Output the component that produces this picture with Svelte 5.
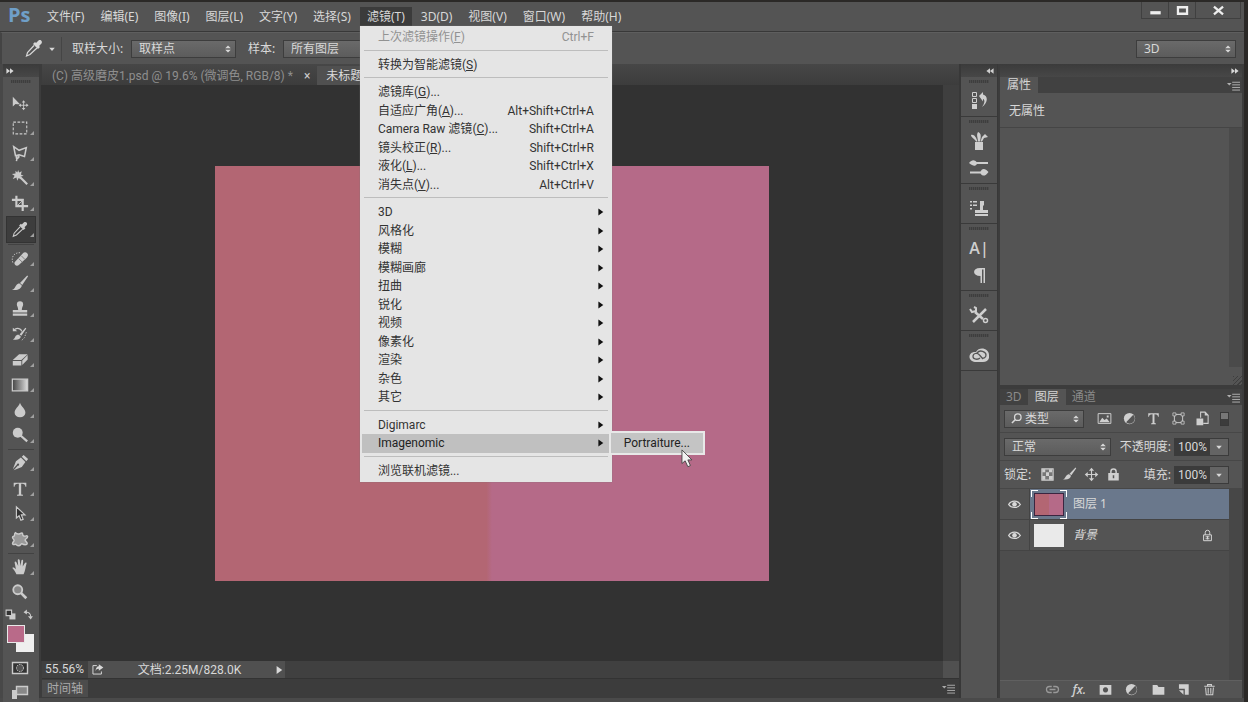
<!--
@component
Photo editor workspace: menu bar with the filter menu open, tool options,
toolbox, document area, icon dock, properties and layers panels.
-->
<script>
  // All icons share a 20x20 box and draw in currentColor.
  const icons = {
    move: '<path fill="currentColor" d="M2 3v11l3-3 2 .5h3z"/><path stroke="currentColor" fill="none" d="M10 12.500h8M14 8.500v8"/><path fill="currentColor" d="M14 7l2 2.500h-4zM14 18l2-2.500h-4zM8.500 12.500l2.500-2v4zM19.500 12.500l-2.500-2v4z"/>',
    marquee: '<path fill="none" stroke="currentColor" stroke-width="1.200" stroke-dasharray="3 1.700" d="M2.500 3.500h15v13h-15z"/>',
    lasso: '<path fill="none" stroke="currentColor" stroke-width="1.700" d="M3 3l6 4 8-3-2 10-6-2-4 1zM5 13c3-1 5 1 3 2.500-2 1.500-3-.500-1-1.500M7 15l-1 4"/>',
    wand: '<path fill="currentColor" d="M8 1l1 3 3-1.500L11 6l3 1.500-3.500 1L12 12l-3.500-2L7 13l-1-3.500L2 11l2-3.500-3-2 4-.500L5 2l2 2z"/><path stroke="currentColor" stroke-width="2.400" d="M10 9l8 8"/>',
    crop: '<path fill="none" stroke="currentColor" stroke-width="2.400" d="M6 2v11.500h13M1 6.500h12V19"/><path stroke="currentColor" d="M7 13l7-7"/>',
    eyedropper: '<path fill="currentColor" d="M12 4l2.500-2.500c2-1.500 4.500 1 3 3L15 7l1 1-2 2-5-5 2-2z"/><path fill="none" stroke="currentColor" stroke-width="1.200" d="M10 6.500l-6.500 7L2.500 17l3.500-1.500 7-6.500"/>',
    heal: '<path fill="currentColor" d="M5 12.500L13 4c1.500-2 3.500-2 5-.500s1 3.500-.500 5L9 16.500c-1.500 1.500-3.500 1.300-4.500 0s-1-2.500.500-4z"/><path stroke="#777" fill="none" d="M8.500 9.500l4 4M11.500 6.500l4 4"/><path fill="none" stroke="currentColor" stroke-dasharray="1.500 1.500" d="M2 14C0 8 3 3 10 3"/>',
    brush: '<path fill="currentColor" d="M19 1.500L12.500 11l-2.500-2 8-8.500zM9.500 9.500l2.500 2.300c-.500 3.700-4.500 5.700-11 4.700 3-.500 3-2.500 4.500-4.500 1-2 2.500-2.500 4-2.500z"/>',
    stamp: '<path fill="currentColor" d="M6.500 5a3.500 3.500 0 0 1 7 0c0 2-1.500 3-1.500 6h6v3H2v-3h6C8 8 6.500 7 6.500 5zM2 15h16v2.500H2z"/>',
    history: '<path fill="currentColor" d="M16 3l1 1-5.500 8-2-1.500zM9 11l2 2c-1 3-4 4-9 3 2.500-1 2-2 3-3.500C6 11 7.500 10.500 9 11z"/><path fill="none" stroke="currentColor" stroke-width="1.400" d="M4 5c3-2 7-1.500 8 2"/><path fill="currentColor" d="M2 3l5 4H2z"/><path fill="none" stroke="currentColor" stroke-dasharray="1.500 1.500" d="M17 8l-2 6-4 4"/>',
    eraser: '<path fill="currentColor" d="M9 3.500h9.500l-7 6.500H2zM2 11h9.500v5H2zM12.500 10.500l6-6v5l-6 6z"/>',
    gradient: '<defs><linearGradient id="ramp"><stop stop-color="#444"/><stop offset="1" stop-color="#ddd"/></linearGradient></defs><path fill="url(#ramp)" stroke="currentColor" stroke-width="1.400" d="M1.500 3.500h17v13h-17z"/>',
    drop: '<path fill="currentColor" d="M10 2c1 4 6 6.500 6 11a6 5 0 0 1-12 0c0-4.500 5-7 6-11z"/>',
    dodge: '<circle cx="7.500" cy="7.500" r="5.500" fill="currentColor"/><path stroke="currentColor" stroke-width="2.500" d="M10 10l8 7"/>',
    pen: '<path fill="currentColor" d="M2 17L5.500 8 11 4l5 5-4 5.500-9 3.500 4.500-5a1.300 1.300 0 1 0-1-1zM12 3l2-2 5 4.500-2 2.500z"/>',
    type: '<path fill="currentColor" d="M3 3h14v4.500h-1c-.300-2-.800-3.200-4.700-3.200v11.700l2 .500v1h-6.600v-1l2-.500V4.300C4.800 4.300 4.300 5.500 4 7.500H3z"/>',
    arrow: '<path fill="#333" stroke="currentColor" stroke-width="1.300" d="M6 2v12.500l3-2.500 2 5 2.500-1-2-5h4z"/>',
    shape: '<path fill="#999" stroke="currentColor" stroke-width="1.600" d="M5 3c2 2 3 2 5 1s3-1 3 1 2 2 4 1.500 2 2-.500 3.500 1.500 3 1.500 5-4 1.500-5.500.500-1.500 2-4 2-2-2-4-1.500S1 16 2 14s2.500-2 1-3.500-2-3 0-3.500S3 4 5 3z"/>',
    hand: '<path fill="currentColor" d="M6 18c-1-3-3-5-4.500-7 1-1 2.300-.500 4 1.500L4 5c0-1.300 1.500-1.500 2-.300L8 9 7.500 2.500c0-1.500 2-1.500 2.200 0L10.500 9l1-6c.300-1.500 2-1.200 2 .200L13 9.500l2.500-4c.800-1.200 2.200-.500 1.700.800C16 10 16 14 14 18z"/>',
    zoom: '<circle cx="7.500" cy="7.500" r="5" fill="#888" stroke="currentColor" stroke-width="2"/><path stroke="currentColor" stroke-width="3" d="M11 11l6 6"/>',
    mask: '<path fill="#333" stroke="currentColor" stroke-width="1.400" d="M2.500 4.500h15v11h-15z"/><circle cx="10" cy="10" r="3.500" fill="#555" stroke="currentColor" stroke-dasharray="1.500 1"/>',
    screen: '<path fill="currentColor" d="M2 8h5v9H2z"/><path fill="#888" stroke="currentColor" stroke-width="1.400" d="M6.500 4.500h11v8h-11z"/>',
    historyPanel: '<path fill="none" stroke="currentColor" d="M3.500 1.500h4v4h-4zM3.500 7.500h4v4h-4z"/><path fill="currentColor" d="M3 13h5v5H3zM10 5l4-4v2.500c5 1 5.500 8-1 12.500 3-4 3-7.500 1-8v2.500z"/>',
    brushPots: '<path fill="currentColor" d="M6 11h8v8H6zM2 4c3-1 5 2 6.500 6.500H7C6 7.500 2 7 2 4zM9 1c3 1 3.500 4 2 9.500H9C9 7 7 4 9 1zM13 6l3-3 3 3-4 1-2 3.500h-1.500z"/>',
    brushes: '<path fill="currentColor" d="M0 5c3-4 6-3 7.500-1H19v2H8C6 9 4 8 0 5zM19.500 14c-3 4.500-6 4.500-8 1.500H1v-2h10.500c2-4 5-3 8 .500z"/>',
    clone: '<path fill="currentColor" d="M1 3h2v1.500H1zM4 3h4v1.500H4zM1 6.500h2V8H1zM4 6.500h4V8H4zM1 10h2v1.500H1zM11 3h4v4l-1 1v4h5v3H6v-3h5V8zM6 16h13v2H6z"/>',
    paragraph: '<path fill="currentColor" d="M16 3v15h-1.500V4.500H13V18h-1.500v-7C3 11 3 3 11 3z"/>',
    presets: '<path stroke="currentColor" stroke-width="2.500" d="M4 17L17 4M6 7l8 7"/><path fill="none" stroke="currentColor" stroke-width="2" d="M1 4l2 3 4-1V3L5 2"/><circle cx="16.500" cy="15.500" r="2" fill="none" stroke="currentColor" stroke-width="1.500"/>',
    cloud: '<path fill="currentColor" d="M6 17c-8-1-7-11 1-10 3-6 13-4 13 3 1 4-2 7-6 7z"/><path fill="none" stroke="#555" stroke-width="1.300" d="M11 13c-2 2-7 1.500-7-1.500s4-4.500 6.500-1.500l3.500 4M8 8c3-4 9-1 9 2s-3 4-5 2"/>',
    picture: '<path fill="none" stroke="currentColor" stroke-width="1.300" d="M1.500 3.500h17v13h-17z"/><path fill="currentColor" d="M3 15l4-6 3 3 3-2 4 5zM13 6h2.500v2.500H13z"/>',
    adjust: '<circle cx="10" cy="10" r="7.500" fill="currentColor"/><path fill="#555" d="M15 5a6.500 6.500 0 0 1-9.500 10z"/>',
    vector: '<path fill="none" stroke="currentColor" stroke-width="1.300" d="M4.500 5v10M15.500 5v10M5 4.500h10M5 15.500h10"/><path fill="#555" stroke="currentColor" d="M2.500 2.500h4v4h-4zM13.500 2.500h4v4h-4zM2.500 13.500h4v4h-4zM13.500 13.500h4v4h-4z"/>',
    smart: '<path fill="none" stroke="currentColor" stroke-width="1.400" d="M7.500 9V1.500h6l4 4v11H11"/><path fill="currentColor" d="M2 10h9v9H2zM13 1v5h5z"/>',
    pixels: '<path fill="#777" stroke="currentColor" stroke-width="1.500" d="M2.500 2.500h15v15h-15z"/><path fill="currentColor" d="M3 3h4v4H3zM12 3h4v4h-4zM8 7h4v5H8zM3 12h4v5H3zM12 12h5v5h-5z"/>',
    cross: '<path fill="none" stroke="currentColor" stroke-width="1.500" d="M3 10h14M10 3v14"/><path fill="currentColor" d="M10 1l3.500 4h-7zM10 19l3.500-4h-7zM1 10l4-3.500v7zM19 10l-4-3.500v7z"/>',
    lock: '<path fill="none" stroke="currentColor" stroke-width="2" d="M6.500 9V6a3.500 3.500 0 0 1 7 0v3"/><path fill="currentColor" fill-rule="evenodd" d="M3 8h14v10H3zM9 11v4h2v-4z"/>',
    lockLine: '<path fill="none" stroke="currentColor" stroke-width="1.500" d="M6.500 9V5.500a3.500 3.500 0 0 1 7 0V9M4 9h12v9H4zM10 11v5M7 12h6M7 15h6"/>',
    eye: '<path fill="none" stroke="currentColor" stroke-width="2" d="M1 10c4-7 14-7 18 0-4 6-14 6-18 0z"/><circle cx="10" cy="9.500" r="3.500" fill="currentColor"/>',
    link: '<path fill="none" stroke="currentColor" stroke-width="1.700" d="M9 6H6a4 4 0 0 0 0 8h3M11 6h3a4 4 0 0 1 0 8h-3M6 10h8"/>',
    addMask: '<path fill="currentColor" fill-rule="evenodd" d="M1 3h18v15H1zM10 6.500a4 4 0 1 0 .01 0z"/>',
    folder: '<path fill="currentColor" d="M1 3h7l2 3h9v12H1z"/>',
    newLayer: '<path fill="currentColor" d="M3 2h15v16h-6V9H3z"/><path fill="currentColor" d="M3 11h7v7z"/>',
    trash: '<path fill="none" stroke="currentColor" stroke-width="1.600" d="M2 5h16M7 5V2.500h6V5M4 7l1 11h10l1-11M8 7.500v9M12 7.500v9"/>',
    share: '<path fill="none" stroke="currentColor" stroke-width="1.500" d="M9 4H3v13h13v-4"/><path fill="currentColor" d="M12 2l7 5-7 5V9c-3 0-4 1-5 4 0-5 2-8 5-8z"/>',
    search: '<circle cx="12" cy="8" r="5" fill="none" stroke="currentColor" stroke-width="2"/><path stroke="currentColor" stroke-width="2.500" d="M8 12l-5 5"/>',
    defaults: '<path fill="currentColor" d="M8 8h11v11H8z"/><path fill="#333" stroke="currentColor" stroke-width="2" d="M2 2h10v10H2z"/>',
    swap: '<path fill="none" stroke="currentColor" stroke-width="2" d="M5 6c5-1 9 2 9 8"/><path fill="currentColor" d="M1 6l6-5v9zM14 19l-5-6h9z"/>',
    flyout: '<path fill="currentColor" d="M0 6h7l-3.500 4z"/><path stroke="currentColor" stroke-width="1.500" d="M8 5h12M8 9h12M8 13h12M8 17h12"/>',
    spin: '<path fill="currentColor" d="M10 1l7 7H3zM10 19l7-7H3z"/>',
    down: '<path fill="currentColor" d="M3 7h14l-7 8z"/>',
    play: '<path fill="currentColor" d="M4 0l14 10L4 20z"/>',
    left: '<path fill="currentColor" d="M10 3v14L1 10zM19 3v14l-9-7z"/>',
    right: '<path fill="currentColor" d="M1 3v14l9-7zM10 3v14l9-7z"/>',
    minimize: '<path fill="currentColor" d="M2 11h16v5H2z"/>',
    maximize: '<path fill="none" stroke="currentColor" stroke-width="3.500" d="M3 5h14v10H3z"/>',
    close: '<path stroke="currentColor" stroke-width="3.500" d="M3 4l14 12M17 4L3 16"/>',
  };

  const menusBefore = ['文件(F)', '编辑(E)', '图像(I)', '图层(L)', '文字(Y)', '选择(S)'];
  const menusAfter = ['3D(D)', '视图(V)', '窗口(W)', '帮助(H)'];

  // One array per block between separators
  const filterGroups = [
    [{ label: '上次滤镜操作', key: 'F', shortcut: 'Ctrl+F', disabled: true }],
    [{ label: '转换为智能滤镜', key: 'S' }],
    [
      { label: '滤镜库', key: 'G', more: true },
      { label: '自适应广角', key: 'A', more: true, shortcut: 'Alt+Shift+Ctrl+A' },
      { label: 'Camera Raw 滤镜', key: 'C', more: true, shortcut: 'Shift+Ctrl+A' },
      { label: '镜头校正', key: 'R', more: true, shortcut: 'Shift+Ctrl+R' },
      { label: '液化', key: 'L', more: true, shortcut: 'Shift+Ctrl+X' },
      { label: '消失点', key: 'V', more: true, shortcut: 'Alt+Ctrl+V' },
    ],
    ['3D', '风格化', '模糊', '模糊画廊', '扭曲', '锐化', '视频', '像素化', '渲染', '杂色', '其它'].map(
      (label) => ({ label, sub: true })
    ),
    [
      { label: 'Digimarc', sub: true },
      { label: 'Imagenomic', sub: true, open: true },
    ],
    [{ label: '浏览联机滤镜', more: true }],
  ];

  const toolGroups = [
    ['move', 'marquee', 'lasso', 'wand', 'crop', 'eyedropper'],
    ['heal', 'brush', 'stamp', 'history', 'eraser', 'gradient', 'drop', 'dodge'],
    ['pen', 'type', 'arrow', 'shape'],
    ['hand', 'zoom'],
  ];

  const dock = [['historyPanel'], ['brushPots', 'brushes'], ['clone'], ['character', 'paragraph'], ['presets'], ['cloud']];
  const layerFilters = ['picture', 'adjust', 'type', 'vector', 'smart'];
  const locks = ['pixels', 'brush', 'cross', 'lock'];

  let tool = $state('eyedropper');
  let selected = $state('图层 1');
  let opacity = $state('100%');
  let fill = $state('100%');
</script>

{#snippet icon(name, size = '')}
  <svg class="icon {size}" viewBox="0 0 20 20" aria-hidden="true">{@html icons[name]}</svg>
{/snippet}

{#snippet drop(label, value, size)}
  <span class="drop {size}">
    <select aria-label={label}><option>{value}</option></select>
    {@render icon('spin', 'tiny')}
  </span>
{/snippet}

<div class="app">
  <header class="menubar">
    <span class="logo">Ps</span>
    <nav>
      {#each menusBefore as label}
        <button>{label}</button>
      {/each}
      <div class="open-menu">
        <button class="active" aria-expanded="true">滤镜(T)</button>
        <div class="menu" role="menu">
          {#each filterGroups as group, i}
            {#if i > 0}<div class="rule"></div>{/if}
            {#each group as item}
              <div class="entry" class:open={item.open}>
                <button role="menuitem" disabled={item.disabled}>
                  <span>{item.label}{#if item.key}(<u>{item.key}</u>){/if}{#if item.more}...{/if}</span>
                  {#if item.shortcut}<kbd>{item.shortcut}</kbd>{/if}
                  {#if item.sub}{@render icon('play', 'caret')}{/if}
                </button>
                {#if item.open}
                  <div class="submenu" role="menu">
                    <button role="menuitem">Portraiture...</button>
                    <svg class="pointer" viewBox="0 0 14 22" aria-hidden="true">
                      <path d="M2 1v15l3.500-3 3 6.500 2.800-1.300L8.500 12H13z" />
                    </svg>
                  </div>
                {/if}
              </div>
            {/each}
          {/each}
        </div>
      </div>
      {#each menusAfter as label}
        <button>{label}</button>
      {/each}
    </nav>
    <div class="window-controls">
      <button aria-label="最小化">{@render icon('minimize', 'small')}</button>
      <button aria-label="最大化">{@render icon('maximize', 'small')}</button>
      <button class="wide" aria-label="关闭">{@render icon('close', 'small')}</button>
    </div>
  </header>

  <div class="options">
    <button class="current-tool" aria-label="吸管工具">
      {@render icon('eyedropper')}
      {@render icon('down', 'tiny')}
    </button>
    <span class="caption">取样大小:</span>
    {@render drop('取样大小', '取样点', 'w104')}
    <span class="caption">样本:</span>
    {@render drop('样本', '所有图层', 'w104')}
    <span class="grow"></span>
    {@render drop('工作区', '3D', 'w100')}
  </div>

  <div class="workspace">
    <aside class="toolbox">
      <div class="strip">{@render icon('right', 'tiny')}</div>
      <div class="tool-panel">
        <div class="grip"></div>
        <div class="tools">
          {#each toolGroups as group, i}
            {#if i > 0}<hr />{/if}
            {#each group as name}
              <button class:chosen={tool === name} aria-label={name} onclick={() => (tool = name)}>
                {@render icon(name)}
              </button>
            {/each}
          {/each}
        </div>
        <div class="swap">
          {@render icon('defaults', 'small')}
          {@render icon('swap', 'small')}
        </div>
        <div class="swatches"><i class="back"></i><i class="front"></i></div>
        <div class="modes">
          <button aria-label="快速蒙版">{@render icon('mask')}</button>
          <button aria-label="屏幕模式">{@render icon('screen')}</button>
        </div>
      </div>
    </aside>

    <main>
      <div class="doc-tabs">
        <button>(C) 高级磨皮1.psd @ 19.6% (微调色, RGB/8) * <span class="x">×</span></button>
        <button class="active">未标题</button>
      </div>
      <div class="stage">
        <div class="canvas"><div class="artwork"></div></div>
        <div class="scroll"></div>
      </div>
      <div class="status">
        <span class="percent">55.56%</span>
        <div class="info">
          {@render icon('share', 'small')}
          <span>文档:2.25M/828.0K</span>
          {@render icon('play', 'tiny')}
        </div>
        <span class="grow"></span>
        <div class="corner"></div>
      </div>
      <div class="timeline">
        <button>时间轴</button>
        {@render icon('flyout', 'small')}
      </div>
    </main>

    <aside class="dock">
      <div class="strip end">{@render icon('left', 'tiny')}</div>
      {#each dock as group}
        <div class="dock-group">
          {#each group as name}
            <button aria-label={name}>
              {#if name === 'character'}<span class="glyph">A|</span>{:else}{@render icon(name)}{/if}
            </button>
          {/each}
        </div>
      {/each}
      <div class="dock-rest"></div>
    </aside>

    <aside class="panels">
      <div class="strip end">{@render icon('right', 'tiny')}</div>
      <section class="properties">
        <div class="panel-tabs">
          <button class="active">属性</button>
          {@render icon('flyout', 'small')}
        </div>
        <h2>无属性</h2>
        <div class="prop-body"><div class="track"></div></div>
        <div class="resize"></div>
      </section>

      <section class="layers">
        <div class="panel-tabs">
          <button>3D</button>
          <button class="active">图层</button>
          <button>通道</button>
          {@render icon('flyout', 'small')}
        </div>
        <div class="row">
          <span class="drop w80 has-icon">
            {@render icon('search', 'small')}
            <select aria-label="过滤"><option>类型</option></select>
            {@render icon('spin', 'tiny')}
          </span>
          <div class="filters">
            {#each layerFilters as name}
              <button aria-label={name}>{@render icon(name, 'mid')}</button>
            {/each}
            <i class="toggle"></i>
          </div>
        </div>
        <div class="row">
          {@render drop('混合模式', '正常', 'w107')}
          <label for="opacity">不透明度:</label>
          <span class="number">
            <input id="opacity" bind:value={opacity} />
            <button aria-label="调整不透明度">{@render icon('down', 'tiny')}</button>
          </span>
        </div>
        <div class="row">
          <span>锁定:</span>
          <div class="locks">
            {#each locks as name}
              <button aria-label={name}>{@render icon(name, 'mid')}</button>
            {/each}
          </div>
          <label for="fill">填充:</label>
          <span class="number">
            <input id="fill" bind:value={fill} />
            <button aria-label="调整填充">{@render icon('down', 'tiny')}</button>
          </span>
        </div>
        <div class="layer-list">
          <button class="layer" class:selected={selected === '图层 1'} onclick={() => (selected = '图层 1')}>
            <span class="eye">{@render icon('eye', 'small')}</span>
            <span class="frame"><i class="thumb art"></i></span>
            <span class="name">图层 1</span>
          </button>
          <button class="layer" class:selected={selected === '背景'} onclick={() => (selected = '背景')}>
            <span class="eye">{@render icon('eye', 'small')}</span>
            <span class="frame plain"><i class="thumb"></i></span>
            <em class="name">背景</em>
            {@render icon('lockLine', 'small')}
          </button>
        </div>
        <footer>
          <button class="dim" aria-label="链接">{@render icon('link', 'mid')}</button>
          <button class="fx">fx.</button>
          <button aria-label="添加蒙版">{@render icon('addMask', 'small')}</button>
          <button aria-label="调整图层">{@render icon('adjust', 'mid')}</button>
          <button aria-label="新建组">{@render icon('folder', 'small')}</button>
          <button aria-label="新建图层">{@render icon('newLayer', 'small')}</button>
          <button aria-label="删除">{@render icon('trash', 'small')}</button>
        </footer>
      </section>
    </aside>
  </div>
</div>

<style>
  :global(body) {
    margin: 0;
    background: #3c3c3c;
  }

  .app {
    --panel: #545454;
    --line: #383838;
    box-sizing: border-box;
    display: flex;
    flex-direction: column;
    height: 100vh;
    min-height: 700px;
    overflow: hidden;
    border: solid #2b2927;
    border-width: 2px 4px 0 0;
    background: var(--panel);
    color: #d8d8d8;
    font: 12px/16px 'Noto Sans', 'Noto Sans CJK SC', sans-serif;
  }

  .app *,
  .app *::before,
  .app *::after {
    box-sizing: border-box;
  }

  button,
  select,
  input {
    margin: 0;
    padding: 0;
    border: 0;
    border-radius: 0;
    background: none;
    color: inherit;
    font: inherit;
    white-space: nowrap;
  }

  i {
    display: block;
  }

  .icon {
    display: block;
    flex: none;
    width: 20px;
    height: 20px;
  }

  .icon.mid {
    width: 15px;
    height: 15px;
  }

  .icon.small {
    width: 13px;
    height: 13px;
  }

  .icon.tiny {
    width: 8px;
    height: 8px;
  }

  .grow {
    flex: 1;
  }

  /* Menu bar */
  .menubar {
    display: flex;
    flex: none;
    height: 30px;
    border-bottom: 1px solid var(--line);
  }

  .logo {
    width: 40px;
    padding-left: 8px;
    color: #6f9fc8;
    font: bold 20px/26px 'Open Sans', sans-serif;
  }

  nav {
    display: flex;
    gap: 2px;
    height: 24px;
    padding-top: 5px;
  }

  nav > button,
  .open-menu > button {
    height: 19px;
    padding: 0 7px;
  }

  .open-menu {
    position: relative;
  }

  .open-menu > button.active {
    background: #3b3b3b;
  }

  .menu {
    position: absolute;
    z-index: 10;
    top: 19px;
    left: 0;
    display: flex;
    flex-direction: column;
    width: 252px;
    height: 456px;
    padding: 2px;
    background: #e5e5e5;
    color: #333;
    font-family: Roboto, 'Noto Sans CJK SC', sans-serif;
    box-shadow: 0 0 1px #777;
  }

  .entry {
    position: relative;
    flex: 1;
  }

  .entry > button {
    display: flex;
    align-items: center;
    justify-content: space-between;
    width: 100%;
    height: 100%;
    padding: 0 16px;
  }

  .entry > button:disabled {
    color: #929292;
  }

  .entry.open {
    background: #c0c0c0;
    color: #222;
  }

  .entry kbd {
    font: inherit;
  }

  .entry u {
    text-underline-offset: 1px;
  }

  .icon.caret {
    width: 7px;
    height: 8px;
    margin-right: -10px;
    color: #111;
  }

  .rule {
    height: 9px;
    padding-top: 3px;
  }

  .rule::before {
    content: '';
    display: block;
    height: 1px;
    margin: 0 2px;
    background: #bdbdbd;
  }

  .submenu {
    position: absolute;
    top: -3px;
    left: 247px;
    padding: 2px;
    background: #e8e8e8;
  }

  .submenu button {
    width: 92px;
    height: 20px;
    background: #c4c4c4;
  }

  .pointer {
    position: absolute;
    top: 18px;
    left: 71px;
    width: 13px;
    height: 20px;
    fill: #f2f2f2;
    stroke: #444;
  }

  .window-controls {
    display: flex;
    height: 17px;
    margin: 0 3px 0 auto;
    border: 1px solid #404040;
    border-top: 0;
  }

  .window-controls button {
    display: grid;
    place-items: center;
    width: 27px;
    border-right: 1px solid #404040;
    color: #eee;
  }

  .window-controls .wide {
    width: 44px;
    border: 0;
  }

  /* Tool options */
  .options {
    display: flex;
    flex: none;
    align-items: center;
    height: 32px;
    padding: 0 8px 0 7px;
    border-top: 1px solid #5e5e5e;
    border-left: 2px solid #444;
  }

  .current-tool {
    display: flex;
    align-items: center;
    gap: 4px;
    height: 24px;
    margin-right: 10px;
    padding: 0 5px 0 15px;
    border-right: 1px solid #454545;
  }

  .caption {
    min-width: 59px;
  }

  .caption ~ .caption {
    min-width: 35px;
    margin-left: 12px;
  }

  .drop {
    display: grid;
    align-items: center;
    height: 18px;
    border: 1px solid #3d3d3d;
    background: linear-gradient(#6a6a6a, #5c5c5c);
  }

  .drop select {
    grid-area: 1 / 1;
    width: 100%;
    height: 16px;
    padding-left: 7px;
    line-height: 16px;
    appearance: none;
  }

  .drop .icon {
    grid-area: 1 / 1;
    justify-self: end;
    margin-right: 3px;
    pointer-events: none;
  }

  .drop.has-icon .icon.small {
    justify-self: start;
    margin-left: 5px;
  }

  .drop.has-icon select {
    padding-left: 20px;
  }

  .w80 {
    width: 80px;
  }

  .w100 {
    width: 100px;
  }

  .w104 {
    width: 105px;
  }

  .w107 {
    width: 107px;
  }

  /* Columns */
  .workspace {
    display: flex;
    flex: 1;
    min-height: 0;
    padding-right: 2px;
    border-bottom: 4px solid #4a4a4a;
    background: #3c3c3c;
  }

  .strip {
    display: flex;
    flex: none;
    align-items: center;
    height: 13px;
    padding: 0 3px;
    background: linear-gradient(#3b3b3b, #474747);
  }

  .strip.end {
    justify-content: flex-end;
  }

  .toolbox {
    display: flex;
    flex: none;
    flex-direction: column;
    width: 39px;
    padding-left: 3px;
    background: #484848;
  }

  .tool-panel {
    flex: 1;
    background: var(--panel);
    color: #cbcbcb;
  }

  .grip {
    height: 13px;
    padding: 3px 8px;
  }

  .grip::before,
  .dock-group::before {
    content: '';
    display: block;
    width: 20px;
    height: 3px;
    background: repeating-linear-gradient(90deg, #3e3e3e 0 1px, #4b4b4b 1px 2px);
  }

  .tools {
    display: flex;
    flex-direction: column;
    height: 515px;
    padding: 0 3px;
  }

  .tools hr {
    width: 26px;
    height: 3px;
    margin: 0 auto;
    border: 0;
    background: linear-gradient(#545454 1px, #424242 1px, #424242 2px, #545454 2px);
  }

  .tools button {
    display: flex;
    flex: 1;
    align-items: center;
    min-height: 0;
    padding-left: 5px;
  }

  .tools .icon {
    width: 18px;
    height: 18px;
  }

  .tools button.chosen {
    border: 1px solid #333;
    background: #3d3d3d;
    padding-left: 4px;
  }

  .tools button::after {
    content: '';
    align-self: flex-end;
    margin: 0 0 5px 1px;
    border: 2px solid;
    border-color: transparent #a0a0a0 #a0a0a0 transparent;
  }

  .tools button:first-child::after,
  .tools button:last-child::after {
    display: none;
  }

  .swap {
    display: flex;
    justify-content: space-between;
    height: 20px;
    padding: 4px 5px 0 2px;
  }

  .swap .icon {
    width: 11px;
    height: 11px;
  }

  .swatches {
    display: grid;
    grid-template-columns: 9px 9px 9px;
    grid-template-rows: 9px 9px 9px;
    padding-left: 4px;
  }

  .swatches .back {
    grid-area: 2 / 2 / 4 / 4;
    background: #efefef;
  }

  .swatches .front {
    grid-area: 1 / 1 / 3 / 3;
    border: 1px solid #e8e8e8;
    background: #b96a89;
  }

  .modes {
    display: grid;
    gap: 4px;
    padding: 6px 7px;
  }

  /* Document */
  main {
    display: flex;
    flex: 1;
    flex-direction: column;
    min-width: 0;
    padding-left: 3px;
    background: #3c3c3c;
  }

  .doc-tabs {
    display: flex;
    flex: none;
    height: 21px;
    padding-top: 2px;
    overflow: hidden;
    background: linear-gradient(#474747, #3c3c3c);
  }

  .doc-tabs button {
    padding: 0 7px 0 10px;
    color: #8f8f8f;
    font-family: Roboto, 'Noto Sans CJK SC', sans-serif;
  }

  .doc-tabs .active {
    padding: 0 9px;
    background: #505050;
    color: #dcdcdc;
  }

  .x {
    padding-left: 8px;
    color: #ccc;
  }

  .stage {
    display: flex;
    flex: 1;
    min-height: 0;
    margin-left: -1px;
    background: #323232;
  }

  .canvas {
    display: grid;
    flex: 1;
    place-items: center;
  }

  .artwork {
    width: 554px;
    height: 415px;
    background: linear-gradient(90deg, #b36673 49%, #b56a88 50%);
  }

  .scroll {
    width: 16px;
    background: #3f3f3f;
  }

  .status {
    display: flex;
    flex: none;
    height: 17px;
    background: #404040;
    font-family: Roboto, 'Noto Sans CJK SC', sans-serif;
  }

  .percent {
    width: 46px;
    padding-left: 3px;
  }

  .info {
    display: flex;
    align-items: center;
    justify-content: space-between;
    width: 197px;
    padding: 0 2px 0 3px;
    background: #505050;
  }

  .corner {
    width: 16px;
    background: #505050;
  }

  .timeline {
    display: flex;
    flex: none;
    align-items: center;
    justify-content: space-between;
    height: 20px;
    padding: 2px 4px 2px 0;
    border-top: 1px solid #333;
    color: #aaa;
  }

  .timeline button {
    height: 17px;
    padding: 0 5px;
    background: #4c4c4c;
  }

  /* Icon dock */
  .dock {
    display: flex;
    flex: none;
    flex-direction: column;
    width: 39px;
    margin-right: 2px;
    border: solid #383838;
    border-width: 0 1px 0 2px;
    color: #cfcfcf;
  }

  .dock-group {
    display: flow-root;
    padding-bottom: 2px;
    border-bottom: 1px solid #3a3a3a;
    background: var(--panel);
  }

  .dock-group::before {
    margin: 3px 8px 4px;
  }

  .dock-group button {
    display: grid;
    place-items: center;
    width: 100%;
    height: 27px;
  }

  .glyph {
    font: 600 16px/20px 'Open Sans', sans-serif;
  }

  .dock-rest {
    flex: 1;
    background: var(--panel);
  }

  /* Panels */
  .panels {
    display: flex;
    flex: none;
    flex-direction: column;
    width: 242px;
  }

  .panel-tabs {
    display: flex;
    flex: none;
    align-items: center;
    height: 16px;
    padding-right: 2px;
    background: #414141;
    color: #8a8a8a;
  }

  .panel-tabs button {
    height: 16px;
    padding: 0 6px;
  }

  .panel-tabs button.active {
    padding: 0 7px;
    background: var(--panel);
    color: #d4d4d4;
  }

  .panel-tabs .icon {
    margin-left: auto;
    color: #b0b0b0;
  }

  .properties {
    display: flex;
    flex: none;
    flex-direction: column;
    height: 308px;
    background: var(--panel);
  }

  h2 {
    margin: 0;
    padding: 10px 9px 8px;
    border-bottom: 1px solid #454545;
    font: inherit;
  }

  .prop-body {
    display: flex;
    flex: 1;
    justify-content: flex-end;
  }

  .track {
    width: 13px;
    background: #4a4a4a;
  }

  .resize {
    height: 18px;
    background: repeating-linear-gradient(135deg, #3e3e3e 0 1px, #545454 1px 3px) right bottom / 9px 9px no-repeat;
  }

  .layers {
    display: flex;
    flex: 1;
    flex-direction: column;
    min-height: 0;
    margin-top: 4px;
    background: var(--panel);
  }

  .row {
    display: flex;
    flex: none;
    align-items: center;
    height: 28px;
    padding: 0 13px 0 4px;
    border-bottom: 1px solid #474747;
  }

  .row label {
    margin-left: auto;
    padding-right: 3px;
  }

  .filters,
  .locks {
    display: flex;
    align-items: center;
  }

  .filters {
    flex: 1;
    justify-content: space-between;
    padding-left: 13px;
    color: #cfcfcf;
  }

  .toggle {
    width: 9px;
    height: 14px;
    border: 1px solid #393939;
    background: linear-gradient(#777 50%, #3c3c3c 50%);
  }

  .locks {
    gap: 7px;
    padding-left: 9px;
    color: #cfcfcf;
  }

  .number {
    display: flex;
    height: 18px;
    border: 1px solid #3b3b3b;
  }

  .number input {
    width: 35px;
    padding-left: 3px;
    background: #3b3b3b;
    font-family: Roboto, sans-serif;
  }

  .number button {
    display: grid;
    place-items: center;
    width: 18px;
    background: #646464;
  }

  .layer-list {
    flex: 1;
    padding-right: 13px;
    background: linear-gradient(90deg, #4d4d4d calc(100% - 13px), #474747 0);
  }

  .layer {
    display: flex;
    align-items: center;
    width: 100%;
    height: 31px;
    padding-right: 15px;
    border-bottom: 1px solid #444;
    background: var(--panel);
  }

  .layer.selected {
    background: linear-gradient(90deg, var(--panel) 30px, #6a788c 30px);
  }

  .eye {
    display: grid;
    place-items: center;
    width: 30px;
    height: 100%;
    border-right: 1px solid #444;
  }

  /* White brackets round the active thumbnail */
  .frame {
    --h: linear-gradient(90deg, #fff 7px, transparent 7px calc(100% - 7px), #fff 0);
    --v: linear-gradient(#fff 7px, transparent 7px calc(100% - 7px), #fff 0);
    margin-left: 1px;
    padding: 3px;
    background:
      var(--h) top / 100% 1px no-repeat,
      var(--h) bottom / 100% 1px no-repeat,
      var(--v) left / 1px 100% no-repeat,
      var(--v) right / 1px 100% no-repeat;
  }

  .frame.plain {
    background: none;
  }

  .thumb {
    width: 30px;
    height: 23px;
    background: #eaeaea;
  }

  .thumb.art {
    border: 1px solid #3a2540;
    background: linear-gradient(90deg, #b36673 49%, #b56a88 50%);
  }

  .name {
    padding-left: 6px;
  }

  .layer > .name + :global(.icon) {
    margin-left: auto;
  }

  footer {
    display: flex;
    flex: none;
    align-items: center;
    justify-content: space-between;
    height: 18px;
    padding: 0 26px 0 45px;
    border-top: 1px solid #606060;
    color: #d0d0d0;
  }

  .dim {
    color: #999;
  }

  .fx {
    font: italic 600 12px/16px 'Open Sans', sans-serif;
  }
</style>
